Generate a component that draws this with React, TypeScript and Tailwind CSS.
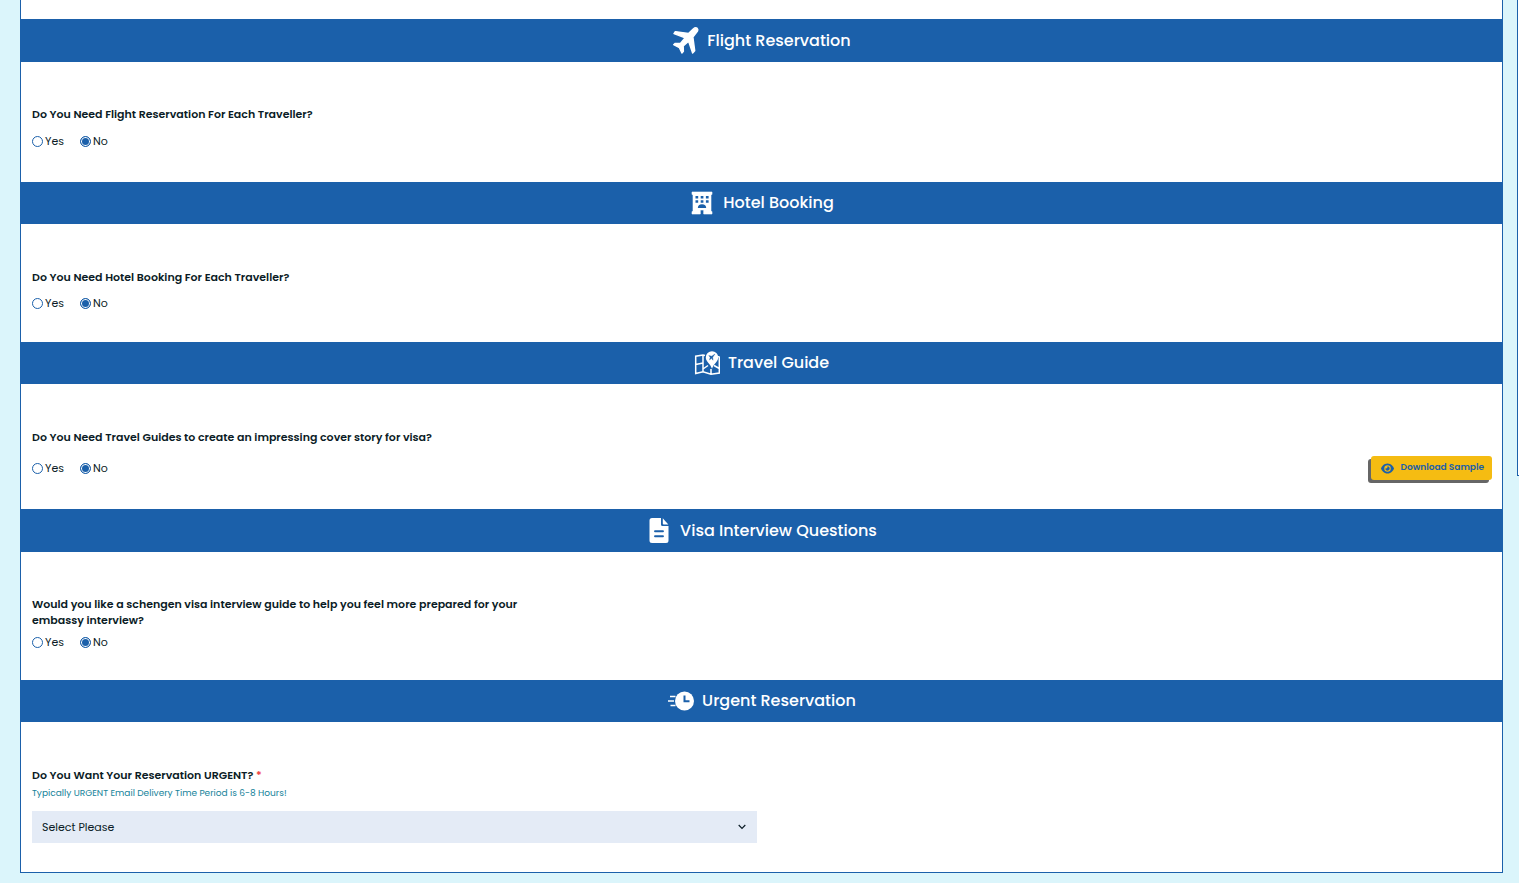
import type { ReactNode } from "react";
import { FaEye } from "react-icons/fa6";

function PlaneIcon() {
  return (
    <svg viewBox="0 0 27 27" className="h-[27px] w-[27px]" fill="currentColor" stroke="currentColor" strokeLinejoin="round">
      <path
        d="M3.300 4.600 16.500 6.500l4.700-4.500c1.200-1 3.200-1.300 4-.6.800.8.400 2.800-.6 4L20.900 10 22.700 23.700 20.600 26 16.600 14.300 11.200 19 11.400 24.200 9.900 26 7.400 20.700 1.700 17.700 3.200 16.400 8.400 16.500 13.200 10.800 2 6.600z"
        strokeWidth="1.400"
      />
    </svg>
  );
}

function HotelIcon() {
  return (
    <svg viewBox="0 0 26 26" className="h-[26px] w-[26px]" fill="currentColor">
      <path d="M3 2h20v2.500h-1V21.500h1V24h-8.300v-4h-3.400v4H3v-2.500h1V4.500H3z" stroke="currentColor" strokeWidth=".6" strokeLinejoin="round" />
      <g fill="#1b60aa">
        <path d="M6.500 6h2.700v2.600H6.500zM11.700 6h2.700v2.600h-2.700zM16.900 6h2.700v2.600h-2.700zM6.500 10.200h2.700v2.600H6.500zM11.700 10.200h2.700v2.600h-2.700zM16.900 10.200h2.700v2.600h-2.700z" />
        <path d="M8.800 18a4.200 3.800 0 0 1 8.400 0z" />
      </g>
    </svg>
  );
}

function MapIcon() {
  return (
    <svg viewBox="0 0 26 26" className="h-[26px] w-[26px]" fill="none" stroke="currentColor">
      <path d="M11 5.500 9 5 1.700 6.200V23.500L9 21.800 17 24.300 25.300 23V7L23.500 6.500M9 5v16.800M17 19v5.300M1.700 14.500l7.300-1.500M9 19l5-3.500M20 15.500l5.300 3" strokeWidth="1.500" />
      <path d="M18 1.200a6.200 6.200 0 0 0-6.200 6.200c0 4 4.400 6 6.200 11.300 1.800-5.300 6.200-7.300 6.200-11.300A6.200 6.200 0 0 0 18 1.200z" fill="currentColor" stroke="none" />
      <path d="M14.800 5.600l3 .6 3.100-2.100-2.200 3.100.3 3-1.500-1.900-2 1.600.7-2.600z" fill="#1b60aa" stroke="#1b60aa" strokeWidth=".4" />
    </svg>
  );
}

function FileIcon() {
  return (
    <svg viewBox="0 0 26 27" className="h-[27px] w-[26px]" fill="currentColor">
      <path d="M6 1h9v6.500A1.500 1.500 0 0 0 16.500 9H22.500v14.500a2.500 2.500 0 0 1-2.500 2.500H6a2.500 2.500 0 0 1-2.500-2.500v-20A2.500 2.500 0 0 1 6 1z" />
      <path d="M16.800 1.300 22.300 7.500H17.800a1 1 0 0 1-1-1z" />
      <path d="M9 14.200h8M9 19.200h8" stroke="#1b60aa" strokeWidth="1.900" strokeLinecap="round" />
    </svg>
  );
}

function FastClockIcon() {
  return (
    <svg viewBox="0 0 27 26" className="h-[26px] w-[27px]" fill="none" stroke="currentColor">
      <circle cx="17.500" cy="13" r="9.500" fill="currentColor" stroke="none" />
      <path d="M3 8.500h5.500M1 13h6M3.500 17.500h5" strokeWidth="1.700" />
      <path d="M17.500 7.500v5.700h5" stroke="#1b60aa" strokeWidth="2" />
    </svg>
  );
}

type SectionProps = {
  title: string;
  icon: ReactNode;
  className: string;
  children: ReactNode;
};

function Section({ title, icon, className, children }: SectionProps) {
  return (
    <section>
      <h2 className="flex items-center justify-center gap-2 bg-[#1b60aa] py-2 text-[16px] leading-6 font-medium text-white">
        {icon}
        {title}
      </h2>
      <div className={`pr-[10px] pl-[11px] ${className}`}>{children}</div>
    </section>
  );
}

function YesNo({ name, label }: { name: string; label: string }) {
  const radio =
    "h-[11px] w-[11px] appearance-none rounded-full border border-[#1b60aa] bg-white checked:bg-[#1b60aa] checked:shadow-[inset_0_0_0_1px_white]";

  return (
    <div role="radiogroup" aria-label={label} className="flex items-center gap-4 text-[11px] leading-4">
      <label className="flex items-center gap-[2px]">
        <input type="radio" name={name} value="yes" className={radio} />
        Yes
      </label>
      <label className="flex items-center gap-[2px]">
        <input type="radio" name={name} value="no" defaultChecked className={radio} />
        No
      </label>
    </div>
  );
}

export default function App() {
  const question = "text-[11px] leading-4 font-semibold";

  return (
    <div className="flex min-h-screen items-start gap-[14px] overflow-hidden bg-[#dbf5fb] pl-5 font-['Poppins','Inter',sans-serif] text-[#0b1c26]">
      <main className="mb-[10px] flex-1 border-x border-b border-[#1b60aa] bg-white pt-[19px]">
        <Section title="Flight Reservation" icon={<PlaneIcon />} className="pt-11 pb-[33px]">
          <p className={question}>Do You Need Flight Reservation For Each Traveller?</p>
          <div className="mt-[11px]">
            <YesNo name="flight" label="Flight reservation" />
          </div>
        </Section>

        <Section title="Hotel Booking" icon={<HotelIcon />} className="pt-[45px] pb-[31px]">
          <p className={question}>Do You Need Hotel Booking For Each Traveller?</p>
          <div className="mt-[10px]">
            <YesNo name="hotel" label="Hotel booking" />
          </div>
        </Section>

        <Section title="Travel Guide" icon={<MapIcon />} className="pt-[45px] pb-[29px]">
          <p className={question}>Do You Need Travel Guides to create an impressing cover story for visa?</p>
          <div className="mt-[11px] flex items-center justify-between">
            <YesNo name="guide" label="Travel guide" />
            <button
              type="button"
              className="flex h-6 items-center gap-1 rounded-[3px] bg-[#f5bc12] px-2 text-[9px] font-semibold text-[#1b60aa] shadow-[-3px_3px_0_#666]"
            >
              <FaEye className="mx-[2px] h-[13px] w-[13px]" />
              Download Sample
            </button>
          </div>
        </Section>

        <Section title="Visa Interview Questions" icon={<FileIcon />} className="pt-11 pb-[30px]">
          <p className={`${question} max-w-1/3`}>
            Would you like a schengen visa interview guide to help you feel more prepared for your embassy interview?
          </p>
          <div className="mt-[6px]">
            <YesNo name="interview" label="Visa interview guide" />
          </div>
        </Section>

        <Section title="Urgent Reservation" icon={<FastClockIcon />} className="pt-[45px] pb-[29px]">
          <label htmlFor="urgent" className={`block ${question}`}>
            Do You Want Your Reservation URGENT? <span className="text-[#f03e3e]">*</span>
          </label>
          <p className="mt-[2px] text-[9px] leading-4 text-[#16839a]">
            Typically URGENT Email Delivery Time Period is 6-8 Hours!
          </p>
          <div className="relative mt-[10px] w-1/2 pr-[5px]">
            <select id="urgent" className="block h-8 w-full appearance-none bg-[#e4ebf6] px-[10px] text-[11px]">
              <option>Select Please</option>
              <option>Yes</option>
              <option>No</option>
            </select>
            <svg
              viewBox="0 0 8 6"
              className="pointer-events-none absolute top-[13px] right-4 h-[6px] w-2"
              fill="none"
              stroke="currentColor"
              strokeWidth="1.200"
            >
              <path d="M.7 1 4 4.300 7.300 1" />
            </svg>
          </div>
        </Section>
      </main>

      <aside className="h-[476px] w-[2px] border-b border-l border-[#1b60aa] bg-white" />
    </div>
  );
}
